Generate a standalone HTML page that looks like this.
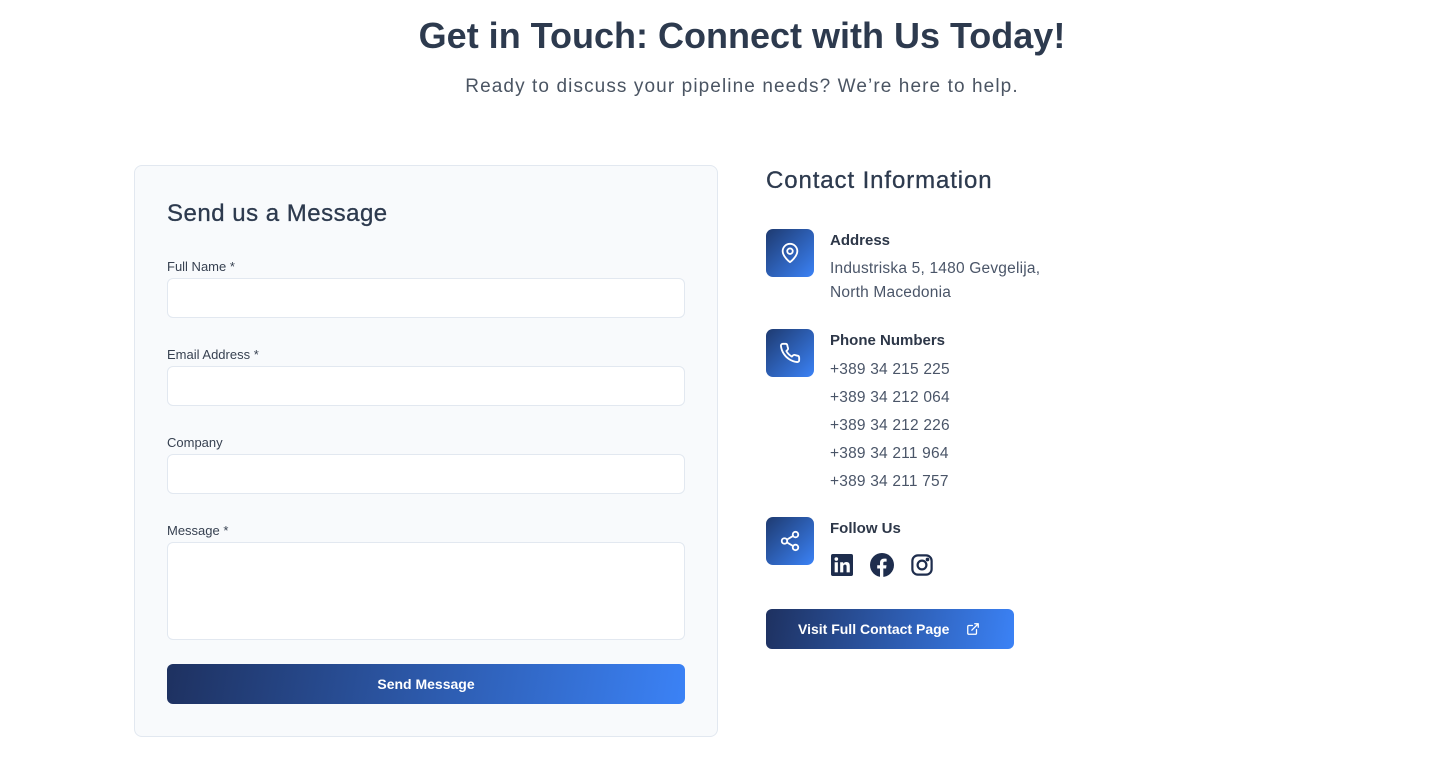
<!DOCTYPE html>
<html><head><style>
*{box-sizing:border-box;margin:0;padding:0}
body{width:1454px;height:781px;background:#fff;font-family:"Liberation Sans",sans-serif;color:#2d3748;position:relative;overflow:hidden}
.a{position:absolute}
h1{position:absolute;left:0;width:1484px;text-align:center;top:15px;font-size:36px;font-weight:700;color:#2d3a4e}
.sub{position:absolute;left:0;width:1484px;text-align:center;top:76px;font-size:19px;color:#4b5563;letter-spacing:1.1px}
.card{left:134px;top:165px;width:584px;height:572px;background:#f8fafc;border:1px solid #e2e8f0;border-radius:8px}
.lbl{font-size:13px;color:#374151;left:167px;top:0}
.inp{left:167px;width:518px;height:40px;background:#fff;border:1px solid #e2e8f0;border-radius:6px}
.grad{background:linear-gradient(100deg,#1e3160,#3b82f6);color:#fff;font-weight:700;font-size:14px;border-radius:6px;display:flex;align-items:center;justify-content:center}
.ic{left:766px;width:48px;height:48px;border-radius:7px;background:linear-gradient(135deg,#1e3a70,#3b82f6);display:flex;align-items:center;justify-content:center}
.t{left:830px;font-size:15px;color:#2d3748;font-weight:700}
.v{left:830px;font-size:15.5px;color:#4a5568;line-height:28px;letter-spacing:.2px}
</style></head><body>
<h1>Get in Touch: Connect with Us Today!</h1>
<div class="sub">Ready to discuss your pipeline needs? We’re here to help.</div>
<div class="a card"></div>
<div class="a" style="left:167px;top:200px;font-size:24px;color:#2d3a4e;letter-spacing:.5px;-webkit-text-stroke:.3px #2d3a4e">Send us a Message</div>
<div class="a lbl" style="top:259px">Full Name *</div><div class="a inp" style="top:278px"></div>
<div class="a lbl" style="top:347px">Email Address *</div><div class="a inp" style="top:366px"></div>
<div class="a lbl" style="top:435px">Company</div><div class="a inp" style="top:454px"></div>
<div class="a lbl" style="top:523px">Message *</div><div class="a inp" style="top:542px;height:98px"></div>
<div class="a grad" style="left:167px;top:664px;width:518px;height:40px">Send Message</div>

<div class="a" style="left:766px;top:167px;font-size:24px;color:#2d3a4e;letter-spacing:.9px;-webkit-text-stroke:.3px #2d3a4e">Contact Information</div>
<div class="a ic" style="top:229px"><svg width="22" height="22" viewBox="0 0 24 24" fill="none" stroke="#fff" stroke-width="2" stroke-linecap="round" stroke-linejoin="round"><path d="M20 10c0 6-8 12-8 12s-8-6-8-12a8 8 0 0 1 16 0z"/><circle cx="12" cy="10" r="3"/></svg></div>
<div class="a t" style="top:232px">Address</div>
<div class="a v" style="top:257px;line-height:24px">Industriska 5, 1480 Gevgelija,<br>North Macedonia</div>
<div class="a ic" style="top:329px"><svg width="22" height="22" viewBox="0 0 24 24" fill="none" stroke="#fff" stroke-width="2" stroke-linecap="round" stroke-linejoin="round"><path d="M22 16.9v3a2 2 0 0 1-2.2 2 19.8 19.8 0 0 1-8.6-3.1 19.5 19.5 0 0 1-6-6A19.8 19.8 0 0 1 2.1 4.2 2 2 0 0 1 4.1 2h3a2 2 0 0 1 2 1.7c.1.9.4 1.9.7 2.8a2 2 0 0 1-.5 2.1L8 9.9a16 16 0 0 0 6 6l1.3-1.3a2 2 0 0 1 2.1-.4c.9.3 1.9.6 2.8.7a2 2 0 0 1 1.7 2z"/></svg></div>
<div class="a t" style="top:332px">Phone Numbers</div>
<div class="a v" style="top:356px">+389 34 215 225<br>+389 34 212 064<br>+389 34 212 226<br>+389 34 211 964<br>+389 34 211 757</div>
<div class="a ic" style="top:517px"><svg width="22" height="22" viewBox="0 0 24 24" fill="none" stroke="#fff" stroke-width="2" stroke-linecap="round"><circle cx="18" cy="5" r="3"/><circle cx="6" cy="12" r="3"/><circle cx="18" cy="19" r="3"/><path d="M8.6 13.5l6.8 4M15.4 6.5l-6.8 4"/></svg></div>
<div class="a t" style="top:520px">Follow Us</div>
<svg class="a" style="left:831px;top:554px" width="22" height="22" viewBox="0 0 24 24"><rect width="24" height="24" rx="2" fill="#1e2d4d"/><rect x="4" y="9" width="3.5" height="11" fill="#fff"/><circle cx="5.8" cy="5.5" r="2" fill="#fff"/><path d="M10 9h3.3v1.6c.6-1 1.8-1.9 3.6-1.9 3 0 3.6 2 3.6 4.6V20H17v-5.8c0-1.4 0-2.6-1.7-2.6s-1.9 1.2-1.9 2.5V20H10z" fill="#fff"/></svg>
<svg class="a" style="left:870px;top:553px" width="24" height="24" viewBox="0 0 24 24"><circle cx="12" cy="12" r="12" fill="#1e2d4d"/><path d="M13.3 24v-8.5h2.8l.4-3.3h-3.2v-2c0-1 .3-1.6 1.6-1.6h1.7V5.7c-.3 0-1.3-.1-2.5-.1-2.5 0-4.1 1.5-4.1 4.2v2.4H7.2v3.3H10V24z" fill="#fff"/></svg>
<svg class="a" style="left:911px;top:554px" width="22" height="22" viewBox="0 0 24 24" fill="none" stroke="#1e2d4d" stroke-width="2.4"><rect x="1.5" y="1.5" width="21" height="21" rx="6"/><circle cx="12" cy="12" r="4.8"/><circle cx="18" cy="6" r=".8" fill="#1e2d4d"/></svg>
<div class="a grad" style="left:766px;top:609px;width:248px;height:40px;justify-content:flex-start;padding-left:32px">Visit Full Contact Page<svg style="margin-left:17px" width="14" height="14" viewBox="0 0 24 24" fill="none" stroke="#fff" stroke-width="2.2" stroke-linecap="round" stroke-linejoin="round"><path d="M18 13v6a2 2 0 0 1-2 2H5a2 2 0 0 1-2-2V8a2 2 0 0 1 2-2h6M15 3h6v6M10 14L21 3"/></svg></div>
</body></html>
